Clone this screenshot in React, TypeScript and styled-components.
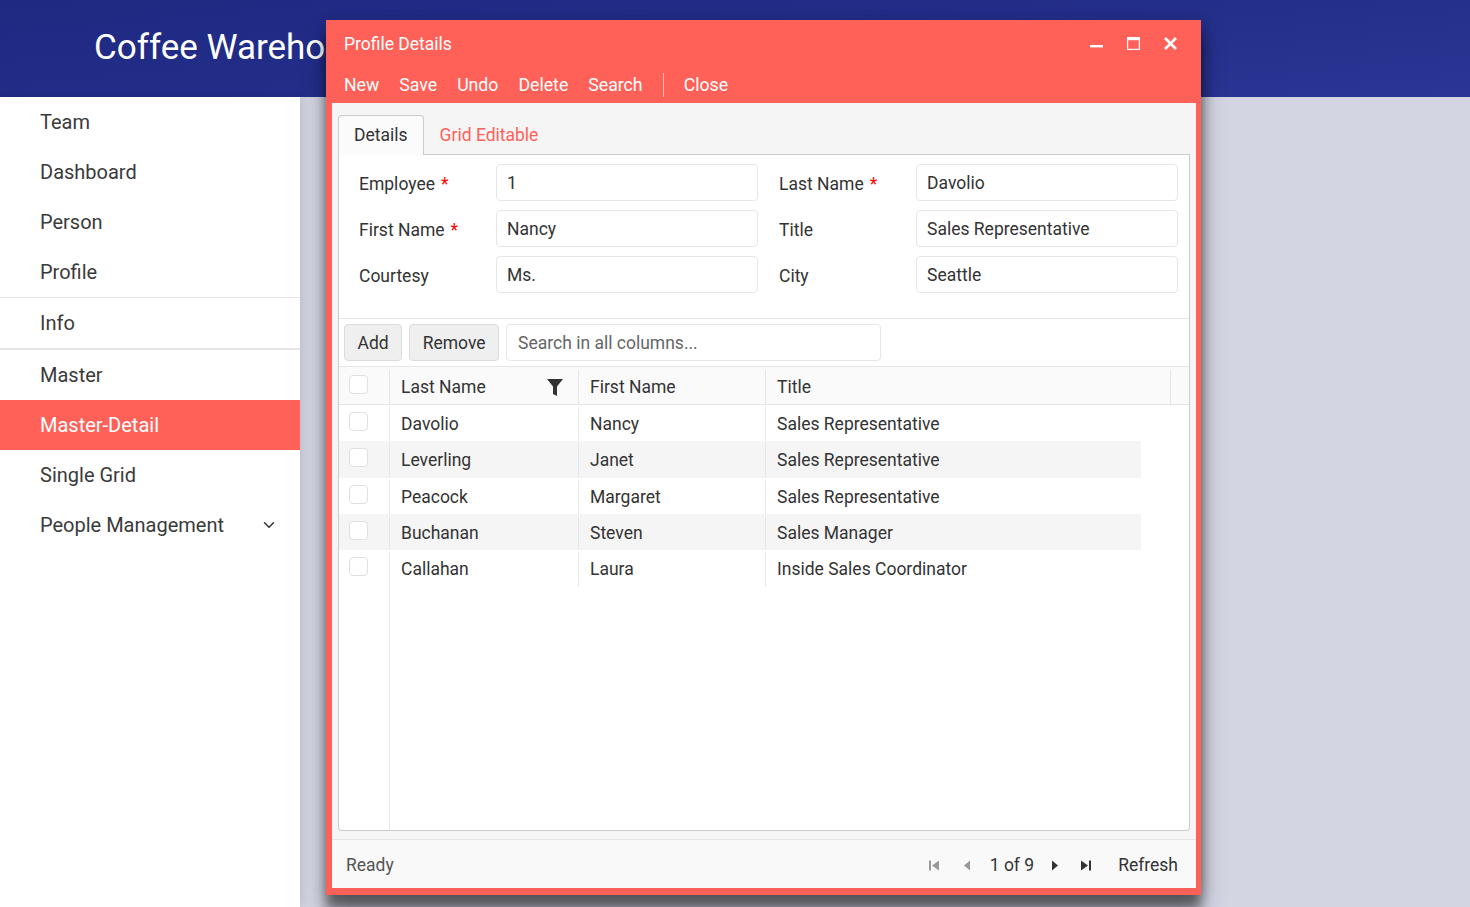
import styled, { createGlobalStyle } from "styled-components";
import { ChevronDown } from "lucide-react";

const CORAL = "#ff6159";
const TEXT = "#333";

const GlobalStyle = createGlobalStyle`
  * { box-sizing: border-box; }
  html, body { margin: 0; padding: 0; }
  body {
    font-family: Roboto, "Noto Sans", "Liberation Sans", sans-serif;
    color: ${TEXT};
    overflow: hidden;
  }
`;

const NAV_ITEMS = [
  { label: "Team" },
  { label: "Dashboard" },
  { label: "Person" },
  { label: "Profile", divider: 1 },
  { label: "Info", divider: 2 },
  { label: "Master" },
  { label: "Master-Detail", active: true },
  { label: "Single Grid" },
  { label: "People Management", expandable: true },
];

const FORM_FIELDS = [
  { label: "Employee", value: "1", required: true },
  { label: "Last Name", value: "Davolio", required: true },
  { label: "First Name", value: "Nancy", required: true },
  { label: "Title", value: "Sales Representative" },
  { label: "Courtesy", value: "Ms." },
  { label: "City", value: "Seattle" },
];

const EMPLOYEES = [
  { last: "Davolio", first: "Nancy", title: "Sales Representative" },
  { last: "Leverling", first: "Janet", title: "Sales Representative" },
  { last: "Peacock", first: "Margaret", title: "Sales Representative" },
  { last: "Buchanan", first: "Steven", title: "Sales Manager" },
  { last: "Callahan", first: "Laura", title: "Inside Sales Coordinator" },
];

const Page = styled.div`
  position: relative;
  height: 100vh;
  display: flex;
  flex-direction: column;
`;

const Header = styled.header`
  height: 97px;
  flex-shrink: 0;
  display: flex;
  align-items: center;
  padding: 0 0 3px 94px;
  background: linear-gradient(174deg, #1f2982 0%, #232e8a 50%, #2a3694 100%);
`;

/* the dialog covers the rest of the brand, so it is cut where the dialog starts */
const Brand = styled.h1`
  margin: 0;
  max-width: 232px;
  overflow: hidden;
  font-size: 35px;
  font-weight: 400;
  color: #fff;
  white-space: nowrap;
`;

const Body = styled.div`
  flex: 1;
  display: flex;
  min-height: 0;
`;

const Sidebar = styled.nav`
  width: 300px;
  flex-shrink: 0;
  background: #fff;
  box-shadow: 2px 0 8px rgba(0, 0, 0, 0.12);
  z-index: 1;
`;

const NavItem = styled.div<{ $active?: boolean; $divider?: number }>`
  box-sizing: content-box;
  height: 50px;
  display: flex;
  align-items: center;
  justify-content: space-between;
  padding: 0 22px 0 40px;
  font-size: 20px;
  color: ${(p) => (p.$active ? "#fff" : "#3a3a3a")};
  background: ${(p) => (p.$active ? CORAL : "transparent")};
  border-bottom: ${(p) => (p.$divider ? `${p.$divider}px solid #e6e6e6` : "none")};
`;

const Main = styled.main`
  flex: 1;
  background: #d3d5e3;
`;

const Dialog = styled.section`
  position: absolute;
  left: 326px;
  top: 20px;
  width: 875px;
  height: 875px;
  display: flex;
  flex-direction: column;
  background: ${CORAL};
  box-shadow: 0 14px 10px rgba(0, 0, 0, 0.42), 0 16px 24px rgba(0, 0, 0, 0.3),
    4px 0 12px rgba(0, 0, 0, 0.12);
  font-size: 17.5px;
  z-index: 5;
`;

const TitleBar = styled.div`
  height: 46px;
  display: flex;
  align-items: center;
  justify-content: space-between;
  padding: 2px 24px 0 18px;
  color: #fff;
`;

const WindowButtons = styled.div`
  display: flex;
  gap: 24px;
  align-items: center;
  margin-top: -2px;
`;

const MenuBar = styled.div`
  height: 37px;
  display: flex;
  align-items: center;
  gap: 20px;
  padding: 0 18px;
  font-size: 17.7px;
  color: #fff;
`;

const MenuSep = styled.span`
  width: 1px;
  height: 24px;
  background: rgba(255, 255, 255, 0.6);
`;

const Content = styled.div`
  flex: 1;
  margin: 0 5px 7px 6px;
  background: #f5f5f5;
  display: flex;
  flex-direction: column;
  min-height: 0;
`;

const TabsArea = styled.div`
  flex: 1;
  display: flex;
  flex-direction: column;
  padding: 12px 6px 0;
  min-height: 0;
`;

const TabStrip = styled.div`
  height: 40px;
  display: flex;
  border-bottom: 1px solid #ccc;
`;

const Tab = styled.div<{ $active?: boolean }>`
  height: 40px;
  display: flex;
  align-items: center;
  padding: 0 15px 1px;
  color: ${(p) => (p.$active ? TEXT : CORAL)};
  background: ${(p) => (p.$active ? "#fbfbfb" : "transparent")};
  border: 1px solid ${(p) => (p.$active ? "#ccc" : "transparent")};
  border-bottom: none;
  border-radius: 4px 4px 0 0;
`;

const TabPanel = styled.div`
  flex: 1;
  display: flex;
  flex-direction: column;
  background: #fff;
  border: 1px solid #ccc;
  border-top: none;
  border-radius: 0 0 4px 4px;
  min-height: 0;
  overflow: hidden;
`;

const Form = styled.div`
  display: grid;
  grid-template-columns: 116px 262px 116px 262px;
  column-gap: 21px;
  row-gap: 9px;
  padding: 9px 11px 25px 20px;
`;

const Label = styled.label`
  align-self: center;
  padding-top: 2px;
  color: ${TEXT};
  white-space: nowrap;
`;

const Required = styled.span`
  color: #f00;
  margin-left: 6px;
`;

const Input = styled.input`
  height: 37px;
  width: 100%;
  border: 1px solid #e6e6e6;
  border-radius: 4px;
  padding: 0 10px;
  font-family: inherit;
  font-size: 17.5px;
  color: ${TEXT};
  background: #fff;
  outline: none;
`;

const Grid = styled.div`
  flex: 1;
  display: flex;
  flex-direction: column;
  border-top: 1px solid #e6e6e6;
  min-height: 0;
`;

const GridToolbar = styled.div`
  display: flex;
  gap: 7px;
  padding: 5px;
`;

const ToolButton = styled.button`
  height: 37px;
  padding: 0 12.5px;
  font-family: inherit;
  font-size: 17.5px;
  color: ${TEXT};
  background: #efefef;
  border: 1px solid #dcdcdc;
  border-radius: 4px;
`;

const SearchBox = styled.input`
  height: 37px;
  width: 375px;
  padding: 0 11px;
  font-family: inherit;
  font-size: 17.5px;
  color: ${TEXT};
  border: 1px solid #e6e6e6;
  border-radius: 4px;
  outline: none;
  &::placeholder { color: #666; }
`;

const HeaderRow = styled.div`
  display: flex;
  height: 39px;
  padding-top: 3px;
  background: #fafafa;
  border-top: 1px solid #e6e6e6;
  border-bottom: 1px solid #e6e6e6;
`;

const Cell = styled.div<{ $w: number; $line?: boolean }>`
  width: ${(p) => p.$w}px;
  flex-shrink: 0;
  display: flex;
  align-items: center;
  justify-content: space-between;
  padding: 0 15px 0 11px;
  color: ${TEXT};
  border-right: ${(p) => (p.$line ? "1px solid #e6e6e6" : "none")};
  white-space: nowrap;
`;

const CheckCell = styled.div`
  width: 51px;
  flex-shrink: 0;
  display: flex;
  align-items: center;
  padding-left: 10px;
  border-right: 1px solid #e6e6e6;
`;

const CheckBox = styled.span`
  width: 19px;
  height: 19px;
  margin-top: -5px;
  border: 1px solid #e0e0e0;
  border-radius: 4px;
  background: #fff;
`;

const Row = styled.div<{ $striped?: boolean }>`
  display: flex;
  width: 802px;
  height: 36.3px;
  padding-top: 2px;
  background: ${(p) => (p.$striped ? "#f5f5f5" : "transparent")};
`;

const Filler = styled.div`
  flex: 1;
  display: flex;
`;

const StatusBar = styled.div`
  height: 49px;
  margin-top: 8px;
  display: flex;
  align-items: center;
  justify-content: space-between;
  padding: 2px 18px 0 14px;
  background: #f9f9f9;
  border-top: 1px solid #e4e4e4;
`;

const StatusText = styled.span`
  color: #555;
`;

const Pager = styled.div`
  display: flex;
  align-items: center;
  color: ${TEXT};
`;

const PageIcon = styled.svg<{ $disabled?: boolean; $gap: number }>`
  width: 10px;
  height: 11px;
  margin-left: ${(p) => p.$gap}px;
  fill: ${(p) => (p.$disabled ? "#999" : "#333")};
`;

const PagerText = styled.span<{ $gap: number }>`
  margin-left: ${(p) => p.$gap}px;
`;

const MinimizeIcon = () => (
  <svg width="13" height="13" viewBox="0 0 13 13">
    <rect x="0" y="8" width="13" height="2.4" fill="#fff" />
  </svg>
);

const MaximizeIcon = () => (
  <svg width="13" height="13" viewBox="0 0 13 13">
    <rect x="0.6" y="0.6" width="11.8" height="11.8" fill="none" stroke="#fff" strokeWidth="1.2" />
    <rect x="0" y="0" width="13" height="3.2" fill="#fff" />
  </svg>
);

const CloseIcon = () => (
  <svg width="13" height="13" viewBox="0 0 13 13">
    <path d="M1 1 L12 12 M12 1 L1 12" stroke="#fff" strokeWidth="2.6" />
  </svg>
);

const FilterIcon = () => (
  <svg width="16" height="17" viewBox="0 0 16 17">
    <polygon points="0,0 16,0 10,7.5 10,17 6,15 6,7.5" fill="#333" />
  </svg>
);

export default function App() {
  return (
    <>
      <GlobalStyle />
      <Page>
        <Header>
          <Brand>Coffee Warehouse</Brand>
        </Header>
        <Body>
          <Sidebar>
            {NAV_ITEMS.map((item) => (
              <NavItem key={item.label} $active={item.active} $divider={item.divider}>
                {item.label}
                {item.expandable && <ChevronDown size={18} strokeWidth={2} color="#333" />}
              </NavItem>
            ))}
          </Sidebar>
          <Main />
        </Body>

        <Dialog>
          <TitleBar>
            <span>Profile Details</span>
            <WindowButtons>
              <MinimizeIcon />
              <MaximizeIcon />
              <CloseIcon />
            </WindowButtons>
          </TitleBar>
          <MenuBar>
            <span>New</span>
            <span>Save</span>
            <span>Undo</span>
            <span>Delete</span>
            <span>Search</span>
            <MenuSep />
            <span>Close</span>
          </MenuBar>
          <Content>
            <TabsArea>
              <TabStrip>
                <Tab $active>Details</Tab>
                <Tab>Grid Editable</Tab>
              </TabStrip>
              <TabPanel>
                <Form>
                  {FORM_FIELDS.flatMap((f) => [
                    <Label key={f.label}>
                      {f.label}
                      {f.required && <Required>*</Required>}
                    </Label>,
                    <Input key={f.label + "-input"} defaultValue={f.value} />,
                  ])}
                </Form>
                <Grid>
                  <GridToolbar>
                    <ToolButton>Add</ToolButton>
                    <ToolButton>Remove</ToolButton>
                    <SearchBox placeholder="Search in all columns..." />
                  </GridToolbar>
                  <HeaderRow>
                    <CheckCell>
                      <CheckBox />
                    </CheckCell>
                    <Cell $w={189} $line>
                      Last Name
                      <FilterIcon />
                    </Cell>
                    <Cell $w={187} $line>First Name</Cell>
                    <Cell $w={405} $line>Title</Cell>
                    <Cell $w={18} />
                  </HeaderRow>
                  {EMPLOYEES.map((e, i) => (
                    <Row key={e.last} $striped={i % 2 === 1}>
                      <CheckCell>
                        <CheckBox />
                      </CheckCell>
                      <Cell $w={189} $line>{e.last}</Cell>
                      <Cell $w={187} $line>{e.first}</Cell>
                      <Cell $w={375}>{e.title}</Cell>
                    </Row>
                  ))}
                  <Filler>
                    <CheckCell />
                  </Filler>
                </Grid>
              </TabPanel>
            </TabsArea>
            <StatusBar>
              <StatusText>Ready</StatusText>
              <Pager>
                <PageIcon $disabled $gap={0} viewBox="0 0 10 11">
                  <rect x="0" y="0.5" width="2" height="10" />
                  <polygon points="10,0.5 10,10.5 3,5.5" />
                </PageIcon>
                <PageIcon $disabled $gap={23} viewBox="0 0 10 11">
                  <polygon points="8,0.5 8,10.5 2,5.5" />
                </PageIcon>
                <PagerText $gap={18}>1 of 9</PagerText>
                <PageIcon $gap={16} viewBox="0 0 10 11">
                  <polygon points="2,0.5 2,10.5 8,5.5" />
                </PageIcon>
                <PageIcon $gap={21} viewBox="0 0 10 11">
                  <polygon points="0,0.5 0,10.5 7,5.5" />
                  <rect x="8" y="0.5" width="2" height="10" />
                </PageIcon>
                <PagerText $gap={27}>Refresh</PagerText>
              </Pager>
            </StatusBar>
          </Content>
        </Dialog>
      </Page>
    </>
  );
}
